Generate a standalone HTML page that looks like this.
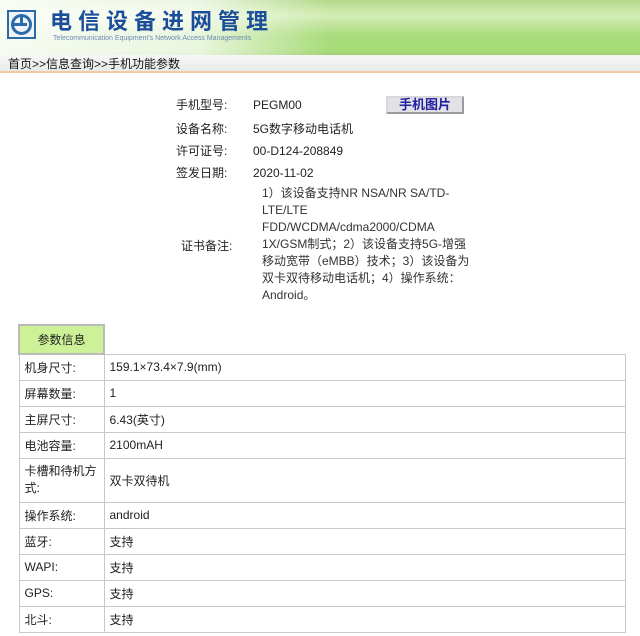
<!DOCTYPE html>
<html><head><meta charset="utf-8"><style>
*{margin:0;padding:0;box-sizing:border-box}
body{width:640px;height:636px;background:#fff;font-family:"Liberation Sans","Noto Sans CJK SC",sans-serif;font-size:12px;color:#222;position:relative;overflow:hidden}
.hdr{position:absolute;left:0;top:0;width:640px;height:55px;background:linear-gradient(180deg,#b2d98a 0%,#cbe8a8 20%,#d2edb4 30%,#bfe49a 45%,#a9dc7c 65%,#a8dc78 90%,#a3d176 100%)}
.hdr .fade{position:absolute;left:0;top:0;width:330px;height:55px;background:linear-gradient(90deg,rgba(255,255,255,.9) 0%,rgba(255,255,255,.75) 60%,rgba(255,255,255,0) 100%)}
.title{position:absolute;left:50px;top:7px;font-size:22px;line-height:26px;font-weight:bold;color:#1b4d9a;letter-spacing:6px;font-family:"Noto Sans CJK SC",sans-serif;white-space:nowrap}
.sub{position:absolute;left:53px;top:35px;font-size:7px;color:#6a8ab5;white-space:nowrap}
.crumb{position:absolute;left:0;top:55px;width:640px;height:18px;background:linear-gradient(#f6f7f6,#e9ebea);border-bottom:2px solid #f4c9a6;font-size:12px;padding-left:8px;line-height:18px;color:#111}
.l{position:absolute;font-size:12px;line-height:16px;color:#222;white-space:nowrap}
.btn{position:absolute;left:386px;top:96px;width:78px;height:18px;background:#e2e2e6;border:2px solid #9a9aa0;border-top-color:#d8d8dc;border-left-color:#d8d8dc;color:#2020a0;font-weight:bold;font-size:13px;text-align:center;line-height:14px}
.rem{position:absolute;left:262px;top:185px;line-height:17px;font-size:12px;color:#333;white-space:nowrap}
table{position:absolute;left:18px;top:324px;width:608px;border-collapse:collapse}
td{border:1px solid #c8c8c8;height:26px;padding:0 5px;font-size:12px;color:#222}
td.k{width:85px}
.th{background:#cdf196;text-align:center;border:2px solid #bbb;height:29px}
.noB{border:none;border-bottom:1px solid #c8c8c8}
</style></head><body>
<div class="hdr"><div class="fade"></div>
<svg style="position:absolute;left:7px;top:10px" width="29" height="29" viewBox="0 0 29 29"><rect x="1" y="1" width="27" height="27" fill="#eef4f8" stroke="#2a6aa8" stroke-width="2"/><circle cx="14.5" cy="14.5" r="9" fill="none" stroke="#2a6aa8" stroke-width="3"/><line x1="5" y1="14.5" x2="20" y2="14.5" stroke="#2a6aa8" stroke-width="3"/><line x1="14.5" y1="5" x2="14.5" y2="14.5" stroke="#2a6aa8" stroke-width="3"/></svg>
<div class="title">电信设备进网管理</div>
<div class="sub">Telecommunication Equipment's Network Access Managements</div>
</div>
<div class="crumb">首页&gt;&gt;信息查询&gt;&gt;手机功能参数</div>
<div class="l" style="left:176px;top:97px">手机型号:</div><div class="l" style="left:253px;top:97px">PEGM00</div>
<div class="btn">手机图片</div>
<div class="l" style="left:176px;top:121px">设备名称:</div><div class="l" style="left:253px;top:121px">5G数字移动电话机</div>
<div class="l" style="left:176px;top:143px">许可证号:</div><div class="l" style="left:253px;top:143px">00-D124-208849</div>
<div class="l" style="left:176px;top:165px">签发日期:</div><div class="l" style="left:253px;top:165px">2020-11-02</div>
<div class="l" style="left:181px;top:238px">证书备注:</div>
<div class="rem">1）该设备支持NR NSA/NR SA/TD-<br>LTE/LTE<br>FDD/WCDMA/cdma2000/CDMA<br>1X/GSM制式；2）该设备支持5G-增强<br>移动宽带（eMBB）技术；3）该设备为<br>双卡双待移动电话机；4）操作系统：<br>Android。</div>
<table>
<tr><td class="th">参数信息</td><td class="noB"></td></tr>
<tr><td class="k">机身尺寸:</td><td>159.1×73.4×7.9(mm)</td></tr>
<tr><td class="k">屏幕数量:</td><td>1</td></tr>
<tr><td class="k">主屏尺寸:</td><td>6.43(英寸)</td></tr>
<tr><td class="k">电池容量:</td><td>2100mAH</td></tr>
<tr><td class="k" style="height:44px;line-height:17px">卡槽和待机方式:</td><td>双卡双待机</td></tr>
<tr><td class="k">操作系统:</td><td>android</td></tr>
<tr><td class="k">蓝牙:</td><td>支持</td></tr>
<tr><td class="k">WAPI:</td><td>支持</td></tr>
<tr><td class="k">GPS:</td><td>支持</td></tr>
<tr><td class="k">北斗:</td><td>支持</td></tr>
</table>
</body></html>
